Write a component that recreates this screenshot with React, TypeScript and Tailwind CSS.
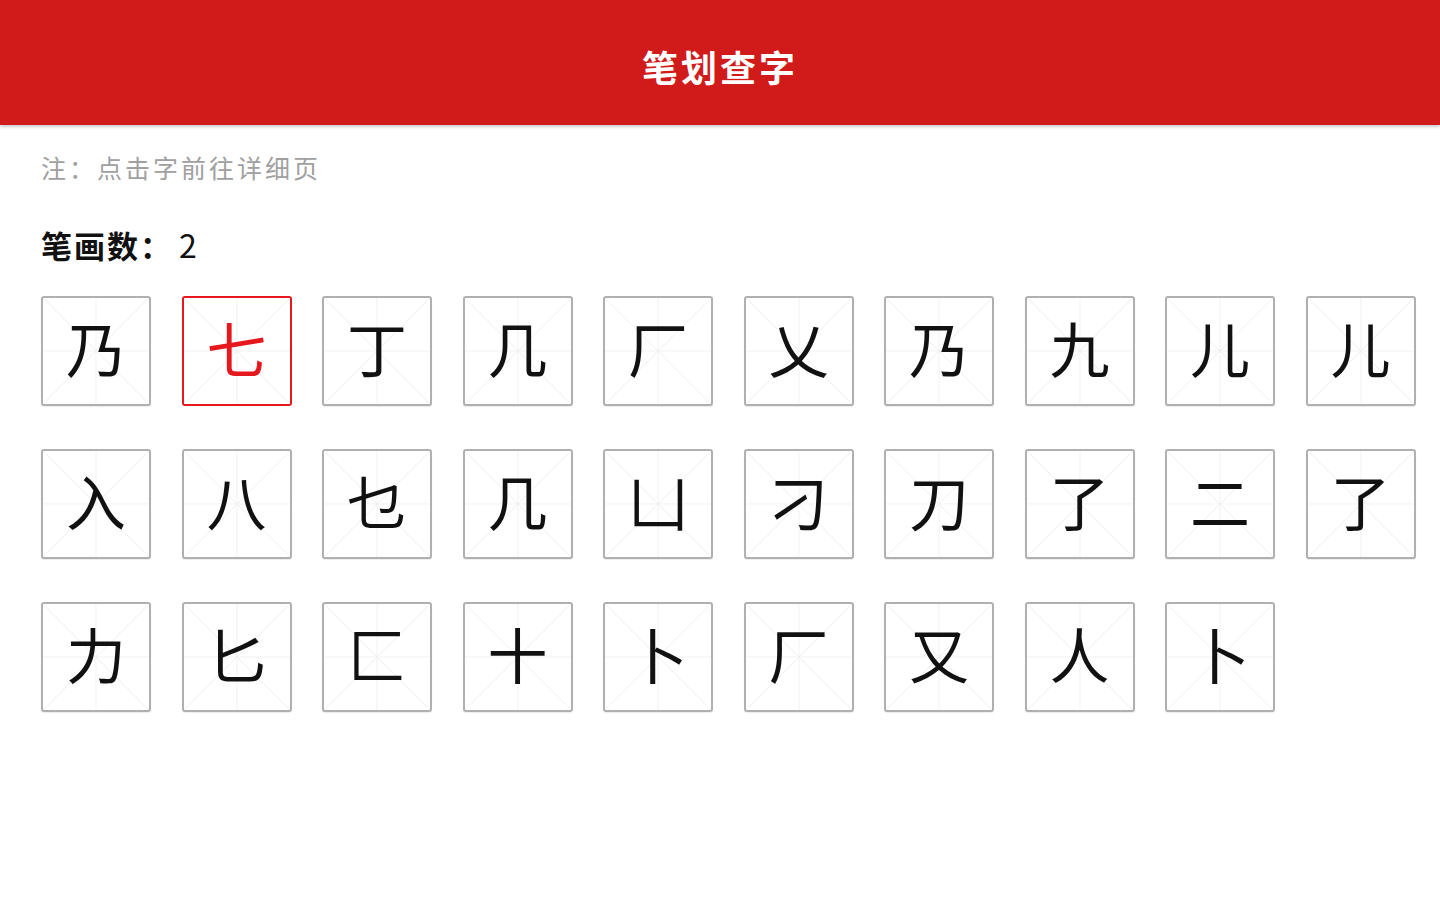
const chars = [
  '乃', '七', '丁', '几', '厂', '乂', '乃', '九', '儿', '儿',
  '入', '八', '乜', '几', '凵', '刁', '刀', '了', '二', '了',
  '力', '匕', '匚', '十', '卜', '厂', '又', '人', '卜',
]

const font = { fontFamily: '"Noto Sans CJK SC", "Noto Sans", sans-serif' }

function GridLines() {
  return (
    <svg className="absolute inset-0 h-full w-full" viewBox="0 0 100 100" preserveAspectRatio="none">
      <line x1="0" y1="0" x2="100" y2="100" stroke="#ececec" strokeWidth="0.8" />
      <line x1="100" y1="0" x2="0" y2="100" stroke="#ececec" strokeWidth="0.8" />
      <line x1="50" y1="0" x2="50" y2="100" stroke="#f0f0f0" strokeWidth="0.8" />
      <line x1="0" y1="50" x2="100" y2="50" stroke="#f0f0f0" strokeWidth="0.8" />
    </svg>
  )
}

function CharBox({ ch, active }: { ch: string; active?: boolean }) {
  return (
    <div
      className={
        active
          ? 'relative flex h-[110px] w-[110px] items-center justify-center rounded-[3px] border-2 border-[#e5181e] bg-white'
          : 'relative flex h-[110px] w-[110px] items-center justify-center rounded-[3px] border-2 border-[#b0b0b0] bg-white shadow-[0_1px_1px_rgba(0,0,0,0.08)]'
      }
    >
      <GridLines />
      <span
        className={
          active
            ? 'relative mb-[8px] text-[60px] leading-none text-[#e5181e]'
            : 'relative mb-[8px] text-[60px] leading-none text-[#111]'
        }
        style={{ ...font, fontWeight: 400 }}
      >
        {ch}
      </span>
    </div>
  )
}

export default function App() {
  return (
    <div className="min-h-[900px] w-[1440px] bg-white" style={font}>
      <header className="flex h-[125px] items-center justify-center bg-[#d11a1a] pt-[6px] shadow-[0_2px_3px_rgba(0,0,0,0.2)]">
        <h1 className="text-[36px] font-bold tracking-[3px] text-white">笔划查字</h1>
      </header>

      <div className="px-[41px]">
        <p className="mt-[27px] text-[25px] leading-[30px] tracking-[3px] text-[#a0a0a0]">注：点击字前往详细页</p>

        <h2 className="mt-[42px] text-[31px] font-bold leading-[40px] tracking-[2px] text-[#111]">
          笔画数：<span className="ml-[6px] text-[32px] font-normal">2</span>
        </h2>

        <div className="mt-[31px] grid grid-cols-[repeat(10,110px)] gap-x-[30.5px] gap-y-[43px]">
          {chars.map((ch, i) => (
            <CharBox key={i} ch={ch} active={i === 1} />
          ))}
        </div>
      </div>
    </div>
  )
}
